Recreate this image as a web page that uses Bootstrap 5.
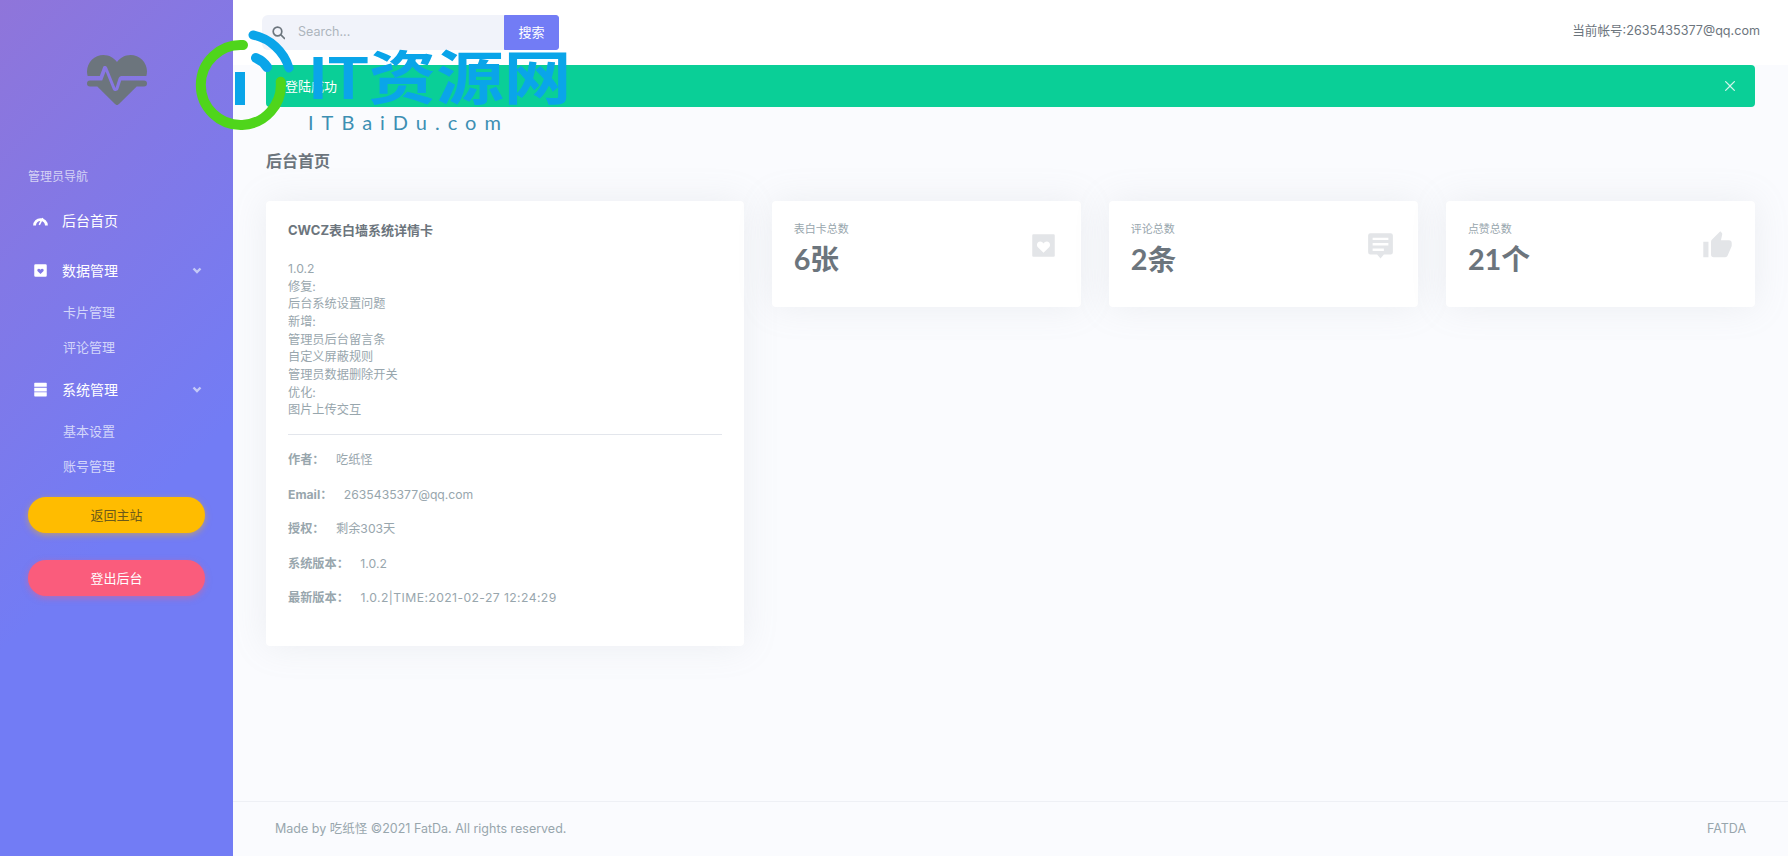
<!DOCTYPE html>
<html lang="zh-CN">
<head>
  <meta charset="UTF-8" />
  <meta name="viewport" content="width=device-width, initial-scale=1.0"/>
  <title>后台首页</title>
  <link href="https://cdn.jsdelivr.net/npm/bootstrap@5.3.0/dist/css/bootstrap.min.css" rel="stylesheet">
  <style>
    body { font-family: Inter, "Noto Sans CJK SC", sans-serif; background: #fafbfe; color: #6c757d; font-size: 12.2px; height: 856px; overflow: hidden; }
    .side-col { width: 233px; flex: none; height: 856px; background: linear-gradient(135deg, #8f75da 0%, #727cf5 60%); }
    .side-logo { height: 168px; padding-top: 55px; }
    .side-logo svg { width: 62px; height: 51px; fill: #6c757d; }
    .side-label { padding-left: 28px; font-size: 12px; line-height: 18px; margin-bottom: 9px; color: #d5d3f5; }
    .side-top { height: 50px; padding: 0 30px 0 33px; color: #fff; font-size: 14px; }
    .side-top:hover, .side-sub:hover { color: #fff; }
    .side-top .ico { width: 15px; height: 15px; fill: #fff; margin-right: 14px; flex: none; }
    .side-top .chev { width: 12px; height: 12px; margin-left: auto; fill: none; stroke: #c4c9f7; stroke-width: 2.4; }
    .side-sub { height: 34.5px; padding-left: 63px; color: #d3d6fa; font-size: 13px; line-height: 34.5px; }
    .side-btns { padding: 14px 28px 0; }
    .pill-btn { height: 36px; line-height: 35px; padding: 0; width: 100%; font-size: 13px; border-radius: 18px; border: 0; }
    .pill-warn { background: #ffbc00; color: #6c5a1a; box-shadow: 0 2px 6px rgba(255,188,0,.5); margin-bottom: 27px; }
    .pill-danger { background: #fa5c7c; color: #fff; box-shadow: 0 2px 6px rgba(250,92,124,.5); }
    .top-bar { height: 65px; background: #fff; padding: 15px 28px 0 29px; align-items: flex-start; flex: none; }
    .search-box { width: 297px; height: 35px; }
    .search-box .input-group-text { background: #f1f3fa; border: 0; padding: 0 0 0 10px; }
    .search-box .form-control { background: #f1f3fa; border: 0; padding-left: 13px; font-size: 12.5px; box-shadow: none; }
    .search-box .form-control::placeholder { color: #adb5bd; }
    .search-box .btn { width: 55px; padding: 0; background: #727cf5; border-color: #727cf5; color: #fff; font-size: 13px; border-radius: 0 3px 3px 0; }
    .acct { color: #6c757d; font-size: 12.6px; line-height: 32px; }
    .main-area { padding: 0 33px; }
    .ok-alert { background: #0acf97; color: #fff; border: 0; height: 42px; padding: 0 0 0 19px; line-height: 42px; margin: 0; border-radius: 4px; font-size: 13px; }
    .ok-alert .btn-close { font-size: 10px; padding: 16px 20px; opacity: .8; }
    .page-head { font-size: 16px; font-weight: 700; color: #6c757d; margin: 0; padding-top: 42px; line-height: 24px; height: 94px; }
    .gut-row { --bs-gutter-x: 28px; }
    .info-panel, .stat-panel { border: 0; border-radius: 4px; box-shadow: 0 0 35px 0 rgba(154,161,171,.15); }
    .info-panel { height: 445px; padding: 19px 22px; color: #98a6ad; }
    .info-title { font-size: 13px; font-weight: 700; color: #6c757d; line-height: 21px; margin-bottom: 19px; }
    .change-log { line-height: 17.67px; }
    .info-panel hr { margin: 15px 0 8px; border-color: #e3e6ec; opacity: 1; }
    .info-row { line-height: 34.5px; }
    .info-row b { color: #98a6ad; margin-right: 8px; }
    .time-val { letter-spacing: .4px; }
    .stat-panel { height: 106px; padding: 18px 22px; }
    .stat-name { font-size: 11px; line-height: 20px; color: #98a6ad; }
    .stat-num { font-family: Lato, "Noto Sans CJK SC", sans-serif; font-size: 28.8px; font-weight: 700; line-height: 36px; margin-top: 2px; color: #6c757d; }
    .stat-ico { position: absolute; right: 24px; top: 31px; width: 27px; height: 27px; fill: #e3e5e8; }
    .stat-ico.thumb-ico { right: 22px; top: 29px; width: 31px; height: 31px; }
    .foot-bar { height: 55px; border-top: 1px solid #eef0f5; padding: 0 42px; color: #98a6ad; font-size: 12.5px; flex: none; }
    .mark-over { position: absolute; left: 192px; top: 26px; pointer-events: none; }
    .mark-over svg { width: 108px; height: 108px; display: block; }
    .mark-big { position: absolute; left: 116px; top: 15px; font-family: Lato, "Noto Sans CJK SC", sans-serif; font-size: 58px; font-weight: 700; line-height: 72px; color: #0aa5e9; white-space: nowrap; transform: scaleX(1.165); transform-origin: left center; }
    .mark-small { position: absolute; left: 116px; top: 83px; font-family: Lato, sans-serif; font-size: 20px; line-height: 26px; color: #3d8fb3; letter-spacing: 8px; white-space: nowrap; }
  </style>
</head>
<body>
<div class="d-flex">
  <aside class="side-col">
    <div class="side-logo text-center">
      <svg viewBox="2 4 20 17"><path d="M7.5,4A5.5,5.5 0 0,0 2,9.5C2,10 2.09,10.5 2.22,11H6.27L7.32,8.15C7.5,7.56 8.3,7.5 8.7,8.14L11.5,15L12.5,11.8C12.7,11.3 13,11 13.5,11H21.78C21.91,10.5 22,10 22,9.5A5.5,5.5 0 0,0 16.5,4C14.64,4 13,4.93 12,6.34C11,4.93 9.36,4 7.5,4M3,12.5A1,1 0 0,0 2,13.5A1,1 0 0,0 3,14.5H5.44L11,20C12,20.9 12,20.9 13,20L18.56,14.5H21A1,1 0 0,0 22,13.5A1,1 0 0,0 21,12.5H13.4L12.47,15.35C12.07,16.23 11.04,16.2 10.63,15.47L8.2,9.5L7.06,12.5H3Z"/></svg>
    </div>
    <div class="side-label">管理员导航</div>
    <nav class="nav flex-column">
      <a class="side-top d-flex align-items-center text-decoration-none" href="#">
        <svg class="ico" viewBox="0 0 24 24" style="fill:none;stroke:#fff"><path d="M2.500 20A9.500 9.500 0 0 1 21.500 20" stroke-width="4.500"/><path d="M10 19 15.500 8" stroke-width="2.500"/></svg>后台首页
      </a>
      <a class="side-top d-flex align-items-center text-decoration-none" href="#">
        <svg class="ico" viewBox="0 0 24 24"><path fill-rule="evenodd" d="M4 2h16a2 2 0 0 1 2 2v16a2 2 0 0 1-2 2H4a2 2 0 0 1-2-2V4a2 2 0 0 1 2-2zm8 15.500 4.500-4.500c1.500-1.800 0-4-1.800-4-1.200 0-2.100.6-2.700 1.600C11.400 9.600 10.500 9 9.300 9c-1.800 0-3.300 2.200-1.800 4z"/></svg>数据管理
        <svg class="chev" viewBox="0 0 12 12"><path d="M2.500 4.500 6 8l3.500-3.500"/></svg>
      </a>
      <a class="side-sub text-decoration-none" href="#">卡片管理</a>
      <a class="side-sub text-decoration-none" href="#">评论管理</a>
      <a class="side-top d-flex align-items-center text-decoration-none" href="#">
        <svg class="ico" viewBox="0 0 24 24"><path d="M3 1h18a1 1 0 0 1 1 1v5.500H2V2a1 1 0 0 1 1-1zM2 9h20v6H2zM2 16.500h20V22a1 1 0 0 1-1 1H3a1 1 0 0 1-1-1z"/></svg>系统管理
        <svg class="chev" viewBox="0 0 12 12"><path d="M2.500 4.500 6 8l3.500-3.500"/></svg>
      </a>
      <a class="side-sub text-decoration-none" href="#">基本设置</a>
      <a class="side-sub text-decoration-none" href="#">账号管理</a>
    </nav>
    <div class="side-btns">
      <button class="btn pill-btn pill-warn d-block" type="button">返回主站</button>
      <button class="btn pill-btn pill-danger d-block" type="button">登出后台</button>
    </div>
  </aside>

  <div class="flex-grow-1 d-flex flex-column" style="height:856px">
    <header class="top-bar d-flex justify-content-between">
      <div class="input-group search-box">
        <span class="input-group-text">
          <svg width="14" height="14" viewBox="0 0 14 14" fill="none" stroke="#6c757d" stroke-width="1.700"><circle cx="5.500" cy="5.500" r="4.300"/><path d="M8.700 8.700 13 13"/></svg>
        </span>
        <input class="form-control" type="text" placeholder="Search...">
        <button class="btn" type="button">搜索</button>
      </div>
      <div class="acct">当前帐号:2635435377@qq.com</div>
    </header>

    <main class="main-area flex-grow-1">
      <div class="alert alert-dismissible ok-alert" role="alert">
        登陆成功
        <button type="button" class="btn-close btn-close-white" aria-label="Close"></button>
      </div>
      <h4 class="page-head">后台首页</h4>
      <div class="row gut-row">
        <div class="col-4">
          <div class="card info-panel">
            <div class="info-title">CWCZ表白墙系统详情卡</div>
            <div class="change-log">
              1.0.2<br>修复:<br>后台系统设置问题<br>新增:<br>管理员后台留言条<br>自定义屏蔽规则<br>管理员数据删除开关<br>优化:<br>图片上传交互
            </div>
            <hr>
            <div class="info-row"><b>作者：</b> 吃纸怪</div>
            <div class="info-row"><b>Email：</b> 2635435377@qq.com</div>
            <div class="info-row"><b>授权：</b> 剩余303天</div>
            <div class="info-row"><b>系统版本：</b> 1.0.2</div>
            <div class="info-row"><b>最新版本：</b> <span class="time-val">1.0.2|TIME:2021-02-27 12:24:29</span></div>
          </div>
        </div>
        <div class="col-8">
          <div class="row gut-row">
            <div class="col-4">
              <div class="card stat-panel position-relative">
                <svg class="stat-ico" viewBox="0 0 24 24"><path fill-rule="evenodd" d="M3 2h18a1 1 0 0 1 1 1v18a1 1 0 0 1-1 1H3a1 1 0 0 1-1-1V3a1 1 0 0 1 1-1zm9 16.500 5-5c1.800-2 .3-5-2-5-1.300 0-2.300.7-3 1.800-.7-1.100-1.700-1.800-3-1.800-2.300 0-3.800 3-2 5z"/></svg>
                <div class="stat-name">表白卡总数</div>
                <div class="stat-num">6张</div>
              </div>
            </div>
            <div class="col-4">
              <div class="card stat-panel position-relative">
                <svg class="stat-ico" viewBox="0 0 24 24"><path fill-rule="evenodd" d="M3 1h18a2 2 0 0 1 2 2v15a2 2 0 0 1-2 2h-6l-3 3.500L9 20H3a2 2 0 0 1-2-2V3a2 2 0 0 1 2-2zm2 4v2.200h14V5zm0 4.800V12h14V9.800zm0 4.800v2.200h10v-2.200z"/></svg>
                <div class="stat-name">评论总数</div>
                <div class="stat-num">2条</div>
              </div>
            </div>
            <div class="col-4">
              <div class="card stat-panel position-relative">
                <svg class="stat-ico thumb-ico" viewBox="0 0 24 24"><path d="M23,10C23,8.89 22.1,8 21,8H14.68L15.64,3.43C15.66,3.33 15.67,3.22 15.67,3.11C15.67,2.7 15.5,2.32 15.23,2.05L14.17,1L7.59,7.58C7.22,7.95 7,8.45 7,9V19A2,2 0 0,0 9,21H18C18.83,21 19.54,20.5 19.84,19.78L22.86,12.73C22.95,12.5 23,12.26 23,12V10M1,21H5V9H1V21Z"/></svg>
                <div class="stat-name">点赞总数</div>
                <div class="stat-num">21个</div>
              </div>
            </div>
          </div>
        </div>
      </div>
    </main>

    <footer class="foot-bar d-flex justify-content-between align-items-center">
      <span>Made by 吃纸怪 ©2021 FatDa. All rights reserved.</span>
      <span>FATDA</span>
    </footer>
  </div>
</div>

<div class="mark-over">
  <svg viewBox="0 0 108 108" fill="none" stroke-linecap="round">
    <path d="M51 19A40 40 0 1 0 88.700 55.700" stroke="#4fd51b" stroke-width="10"/>
    <path d="M61 9A48 48 0 0 1 97 42" stroke="#0aa5e9" stroke-width="9"/>
    <path d="M64 32Q71 35 75 41" stroke="#0aa5e9" stroke-width="10"/>
    <rect x="43" y="46" width="10" height="33" fill="#0aa5e9"/>
  </svg>
  <div class="mark-big">IT资源网</div>
  <div class="mark-small">ITBaiDu.com</div>
</div>

<script src="https://cdn.jsdelivr.net/npm/bootstrap@5.3.0/dist/js/bootstrap.bundle.min.js"></script>
</body>
</html>
